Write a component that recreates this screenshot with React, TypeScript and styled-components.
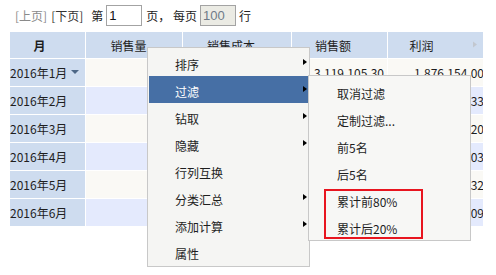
import React from "react";
import styled, { createGlobalStyle } from "styled-components";

const GlobalStyle = createGlobalStyle`
  html, body {
    margin: 0;
    padding: 0;
    background: #ffffff;
  }
  body {
    font-family: "Noto Sans CJK SC", "Liberation Sans", sans-serif;
    font-size: 12px;
    color: #222222;
  }
  * { box-sizing: border-box; }
`;

const Page = styled.div`
  position: relative;
  width: 496px;
  height: 275px;
  overflow: hidden;
`;

const Toolbar = styled.div`
  display: flex;
  align-items: center;
  height: 21px;
  margin-top: 5px;
  padding-left: 15px;
  line-height: 21px;
  white-space: pre;
`;

const PagerLink = styled.span<{ $disabled?: boolean; $gap: number }>`
  color: ${(p) => (p.$disabled ? "#8a8a8a" : "#333333")};
  margin-right: ${(p) => p.$gap}px;
  cursor: ${(p) => (p.$disabled ? "default" : "pointer")};
`;

const Label = styled.span<{ $gap: number }>`
  margin-right: ${(p) => p.$gap}px;
  color: #222222;
`;

const PageInput = styled.input<{ $gap: number }>`
  width: 36px;
  height: 21px;
  margin: 0 ${(p) => p.$gap}px 0 0;
  padding: 0 2px;
  border: 1px solid #a3a3a3;
  font-family: "Liberation Sans", sans-serif;
  font-size: 13px;
  color: #111111;
  background: #ffffff;
  outline: none;
  &:disabled {
    background: #ebebe4;
    color: #6f7b88;
  }
`;

const TableViewport = styled.div`
  margin: 6px 0 0 10px;
  width: 473px;
  overflow: hidden;
`;

const Grid = styled.div`
  display: grid;
  grid-template-columns: 75px 96px 108px 95px 99px;
  grid-template-rows: 26px repeat(6, 27px);
  gap: 1px;
  width: max-content;
  background: #ffffff;
`;

const HeaderCell = styled.div<{ $pad: number; $bold?: boolean }>`
  position: relative;
  display: flex;
  align-items: center;
  justify-content: center;
  padding-right: ${(p) => p.$pad}px;
  background: #cedcef;
  color: #1e1e1e;
  font-weight: ${(p) => (p.$bold ? 700 : 400)};
  white-space: nowrap;
`;

const ScrollArrow = styled.span`
  position: absolute;
  right: 10px;
  top: 50%;
  transform: translateY(-60%);
  width: 0;
  height: 0;
  border-left: 4px solid #c2c7cf;
  border-top: 3px solid transparent;
  border-bottom: 3px solid transparent;
`;

const RowHeaderCell = styled.div`
  display: flex;
  align-items: center;
  background: #cedcef;
  color: #1e1e1e;
  white-space: nowrap;
`;

const DropCaret = styled.span`
  display: inline-block;
  margin-left: 4px;
  margin-top: -2px;
  width: 0;
  height: 0;
  border-top: 4px solid #4d6786;
  border-left: 4px solid transparent;
  border-right: 4px solid transparent;
`;

const DataCell = styled.div<{ $alt: boolean }>`
  display: flex;
  align-items: center;
  justify-content: flex-end;
  padding-right: 3px;
  background: ${(p) => (p.$alt ? "#e4eafd" : "#faf9f5")};
  color: #1e1e1e;
  white-space: nowrap;
`;

const Menu = styled.div`
  position: absolute;
  left: 147px;
  top: 47px;
  width: 163px;
  padding: 1px;
  background: #f5f5f3;
  border: 1px solid #c8c8c8;
  z-index: 2;
`;

const SubMenu = styled.div`
  position: absolute;
  left: 308px;
  top: 75px;
  width: 163px;
  padding: 2px 0 0 0;
  background: #f7f7f5;
  border: 1px solid #c8c8c8;
  z-index: 3;
`;

const MenuItem = styled.div<{ $active?: boolean; $indent: number }>`
  position: relative;
  display: flex;
  align-items: center;
  height: 27px;
  padding: 3px 0 0 ${(p) => p.$indent}px;
  background: ${(p) => (p.$active ? "#466fa5" : "transparent")};
  color: ${(p) => (p.$active ? "#ffffff" : "#1e1e1e")};
  white-space: nowrap;
`;

const SubArrow = styled.span`
  position: absolute;
  right: 1px;
  top: 50%;
  transform: translateY(-65%);
  width: 0;
  height: 0;
  border-left: 4px solid #000000;
  border-top: 3.5px solid transparent;
  border-bottom: 3.5px solid transparent;
`;

const Callout = styled.div`
  position: absolute;
  left: 324px;
  top: 189px;
  width: 99px;
  height: 50px;
  border: 2px solid #e8151f;
  z-index: 4;
  pointer-events: none;
`;

const headers = [
  { label: "月", pad: 16, bold: true },
  { label: "销售量", pad: 11 },
  { label: "销售成本", pad: 12 },
  { label: "销售额", pad: 13 },
];

const rows = [
  { m: "2016年1月", q: "1,245", c: "1,242,951.30", s: "3,119,105.30", p: "1,876,154.00" },
  { m: "2016年2月", q: "1,102", c: "1,015,728.45", s: "2,604,217.78", p: "1,588,489.33" },
  { m: "2016年3月", q: "1,318", c: "1,310,546.80", s: "3,301,872.00", p: "1,991,325.20" },
  { m: "2016年4月", q: "1,276", c: "1,268,410.57", s: "3,198,520.60", p: "1,930,110.03" },
  { m: "2016年5月", q: "1,354", c: "1,342,705.18", s: "3,389,004.50", p: "2,046,299.32" },
  { m: "2016年6月", q: "1,297", c: "1,287,115.91", s: "3,240,716.00", p: "1,953,600.09" },
];

const menuItems = [
  { label: "排序", sub: true },
  { label: "过滤", sub: true, active: true },
  { label: "钻取", sub: true },
  { label: "隐藏", sub: true },
  { label: "行列互换", sub: false },
  { label: "分类汇总", sub: true },
  { label: "添加计算", sub: true },
  { label: "属性", sub: false },
];

const filterItems = ["取消过滤", "定制过滤...", "前5名", "后5名", "累计前80%", "累计后20%"];

export default function App() {
  return (
    <Page>
      <GlobalStyle />
      <Toolbar>
        <PagerLink $disabled $gap={4}>[上页]</PagerLink>
        <PagerLink $gap={8}>[下页]</PagerLink>
        <Label $gap={3}>第</Label>
        <PageInput $gap={4} defaultValue="1" />
        <Label $gap={3}>页， 每页</Label>
        <PageInput $gap={3} defaultValue="100" disabled />
        <Label $gap={0}>行</Label>
      </Toolbar>

      <TableViewport>
        <Grid>
          {headers.map((h) => (
            <HeaderCell key={h.label} $pad={h.pad} $bold={h.bold}>
              {h.label}
            </HeaderCell>
          ))}
          <HeaderCell $pad={32}>
            利润
            <ScrollArrow />
          </HeaderCell>
          {rows.map((r, i) => (
            <React.Fragment key={r.m}>
              <RowHeaderCell>
                {r.m}
                {i === 0 && <DropCaret />}
              </RowHeaderCell>
              <DataCell $alt={i % 2 === 1}>{r.q}</DataCell>
              <DataCell $alt={i % 2 === 1}>{r.c}</DataCell>
              <DataCell $alt={i % 2 === 1}>{r.s}</DataCell>
              <DataCell $alt={i % 2 === 1}>{r.p}</DataCell>
            </React.Fragment>
          ))}
        </Grid>
      </TableViewport>

      <Menu>
        {menuItems.map((m) => (
          <MenuItem key={m.label} $active={m.active} $indent={26}>
            {m.label}
            {m.sub && <SubArrow />}
          </MenuItem>
        ))}
      </Menu>

      <SubMenu>
        {filterItems.map((f) => (
          <MenuItem key={f} $indent={28}>
            {f}
          </MenuItem>
        ))}
      </SubMenu>

      <Callout />
    </Page>
  );
}
